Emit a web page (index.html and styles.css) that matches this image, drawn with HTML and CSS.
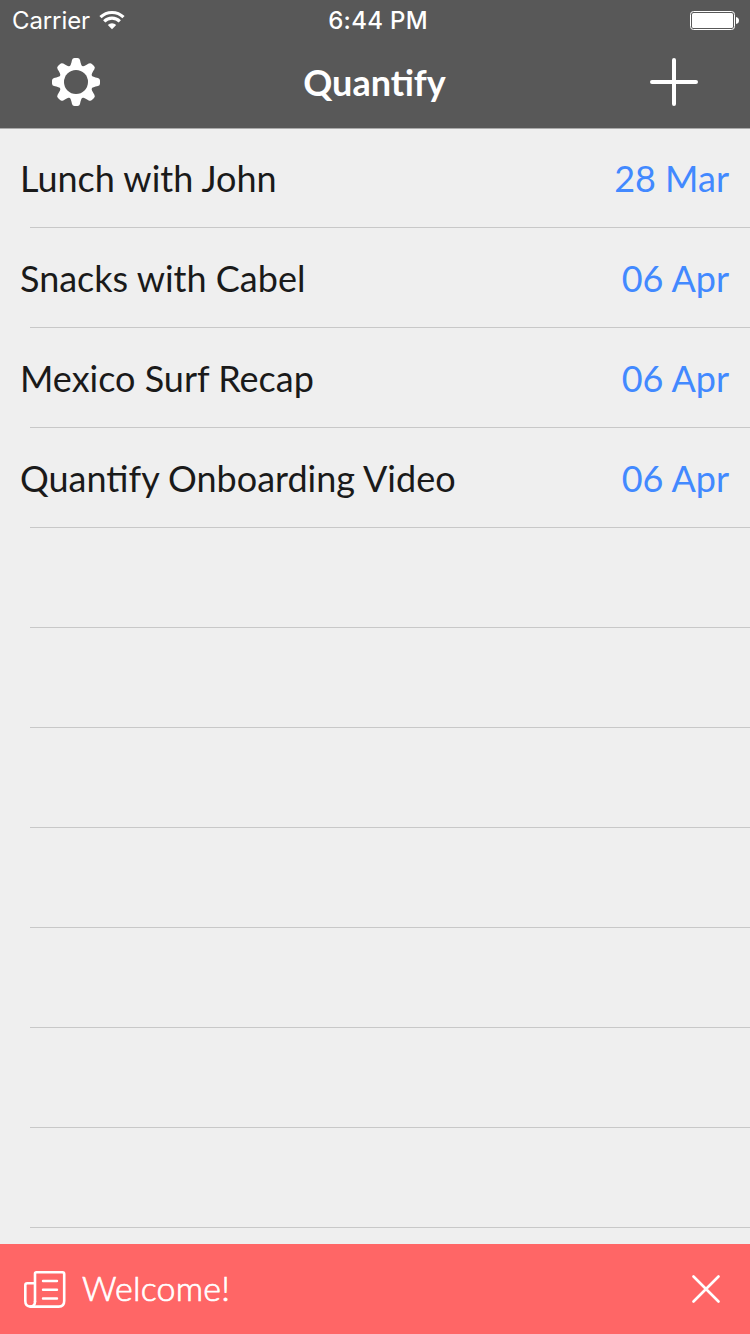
FILE: index.html
```html
<!DOCTYPE html>
<html lang="en">
<head>
<meta charset="utf-8">
<title>Quantify</title>
<link rel="stylesheet" href="styles.css">
</head>
<body>
<div class="screen">
  <header class="header">
    <div class="status">
      <div class="status-left">
        <span class="carrier">Carrier</span>
        <svg class="wifi" width="26" height="20" viewBox="0 0 26 20">
          <g fill="none" stroke="#fff" stroke-width="3.1">
            <path d="M1.5 7.2A16.3 16.3 0 0 1 24.5 7.2"/>
            <path d="M5.2 11.4A11 11 0 0 1 20.8 11.4"/>
          </g>
          <path d="M8.8 15A6 6 0 0 1 17.2 15L13 19.2Z" fill="#fff"/>
        </svg>
      </div>
      <span class="time">6:44 PM</span>
      <svg class="battery" width="50" height="20" viewBox="0 0 50 20">
        <rect x=".5" y=".5" width="44" height="18" rx="3" fill="none" stroke="#fff"/>
        <rect x="2" y="2" width="41" height="15" rx="1.5" fill="#fff"/>
        <path d="M46 6Q49 6.5 49 9.5T46 13Z" fill="#fff"/>
      </svg>
    </div>
    <nav class="nav">
      <svg class="gear" width="48" height="48" viewBox="-24 -24 48 48">
        <defs><path id="tooth" d="M-7.5-14C-5.2-16.4-4.8-18.5-4-22Q-3.5-24-1.5-24H1.5Q3.5-24 4-22C4.8-18.5 5.2-16.4 7.5-14Z"/></defs>
        <g fill="#fff">
          <use href="#tooth"/><use href="#tooth" transform="rotate(45)"/>
          <use href="#tooth" transform="rotate(90)"/><use href="#tooth" transform="rotate(135)"/>
          <use href="#tooth" transform="rotate(180)"/><use href="#tooth" transform="rotate(225)"/>
          <use href="#tooth" transform="rotate(270)"/><use href="#tooth" transform="rotate(315)"/>
          <circle r="17"/>
        </g>
        <circle r="12" fill="#585858"/>
      </svg>
      <h1 class="title">Quantify</h1>
      <svg class="plus" width="48" height="48" viewBox="0 0 48 48">
        <path d="M24 2V46M2 24H46" stroke="#fff" stroke-width="4" stroke-linecap="round"/>
      </svg>
    </nav>
  </header>
  <main class="list">
    <div class="row"><span class="name">Lunch with John</span><span class="date">28 Mar</span></div>
    <div class="row"><span class="name">Snacks with Cabel</span><span class="date">06 Apr</span></div>
    <div class="row"><span class="name">Mexico Surf Recap</span><span class="date">06 Apr</span></div>
    <div class="row"><span class="name">Quantify Onboarding Video</span><span class="date">06 Apr</span></div>
    <div class="row"></div>
    <div class="row"></div>
    <div class="row"></div>
    <div class="row"></div>
    <div class="row"></div>
    <div class="row"></div>
    <div class="row"></div>
  </main>
  <footer class="banner">
    <svg class="news" width="42" height="38" viewBox="0 0 42 38">
      <g fill="none" stroke="#fff" stroke-width="2.6" stroke-linecap="round" stroke-linejoin="round">
        <path d="M11 31.5V3.8Q11 2.3 12.5 2.3H38.5Q40.2 2.3 40.2 4V31Q40.2 36.6 34.7 36.6H6.5Q1.3 36.6 1.3 31V15.2Q1.3 13.2 3.3 13.2H11"/>
        <path d="M11 31.5Q11 36.6 6.5 36.6"/>
        <path d="M19 11H33M19 19.8H33M19 28.5H33" stroke-width="2.4"/>
      </g>
    </svg>
    <span class="message">Welcome!</span>
    <svg class="close" width="28" height="28" viewBox="0 0 28 28">
      <path d="M1.5 1.5L26.5 26.5M26.5 1.5L1.5 26.5" stroke="#fff" stroke-width="2.6" stroke-linecap="round"/>
    </svg>
  </footer>
</div>
</body>
</html>
```

FILE: styles.css
```css
body {
  margin: 0;
  font-family: Lato, sans-serif;
}

.screen {
  display: flex;
  flex-direction: column;
  width: 750px;
  height: 1334px;
  overflow: hidden;
  background: #efefef;
}

.header {
  box-sizing: border-box;
  height: 129px;
  flex: none;
  background: #585858;
  border-bottom: 1px solid #aaa;
  color: #fff;
}

.status {
  display: grid;
  grid-template-columns: 1fr auto 1fr;
  align-items: center;
  height: 40px;
  padding: 0 10px 0 12px;
  font: 24px/40px Inter, sans-serif;
}

.status-left {
  display: flex;
  align-items: center;
  gap: 9px;
}

.carrier {
  padding-top: 2px;
  line-height: 38px;
  letter-spacing: -0.1px;
}

.time {
  padding: 2px 0 0 4px;
  line-height: 38px;
  font-weight: 500;
  letter-spacing: 0.3px;
}

.battery {
  justify-self: end;
  margin-top: 2px;
}

.nav {
  display: grid;
  grid-template-columns: 1fr auto 1fr;
  align-items: center;
  height: 88px;
  padding: 0 52px;
}

.gear {
  margin-top: -4px;
}

.title {
  margin: -4px 1px 0 0;
  font-size: 36px;
  line-height: 44px;
  font-weight: 700;
}

.plus {
  justify-self: end;
  margin-top: -4px;
}

.list {
  flex: 1;
  min-height: 0;
  margin-top: -1px;
}

.row {
  box-sizing: border-box;
  display: flex;
  justify-content: space-between;
  height: 100px;
  padding: 28px 21px 0 20px;
  background: linear-gradient(#c8c8c8, #c8c8c8) 30px 100% / 720px 1px no-repeat;
  font-size: 36px;
  line-height: 44px;
  color: #1a1a1a;
}

.date {
  color: #4289ff;
}

.banner {
  box-sizing: border-box;
  display: flex;
  align-items: center;
  height: 90px;
  flex: none;
  padding: 0 30px 0 24px;
  background: #ff6666;
  color: #fff;
}

.message {
  margin: -2px 0 0 16px;
  font-size: 34px;
  font-weight: 300;
  line-height: 44px;
  letter-spacing: 0.2px;
  -webkit-text-stroke: 0.7px #fff;
}

.close {
  margin-left: auto;
}
```
